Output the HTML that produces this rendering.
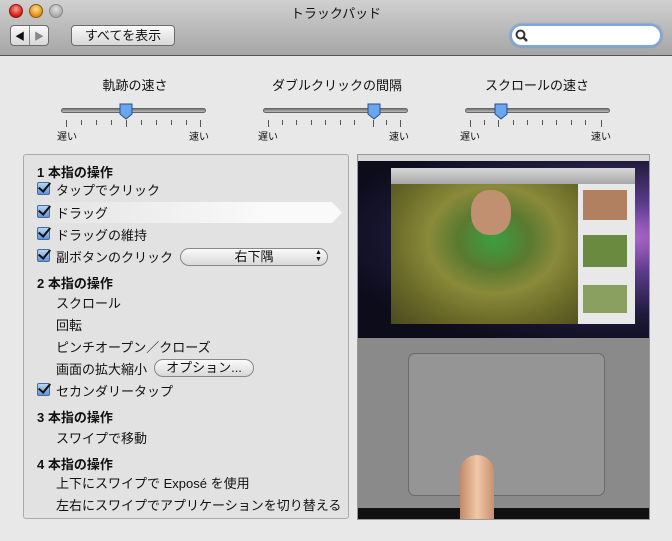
<!DOCTYPE html>
<html><head><meta charset="utf-8"><style>
*{margin:0;padding:0;box-sizing:border-box}
body{width:672px;height:541px;overflow:hidden;background:#e8e8e8;font-family:"Liberation Sans","Noto Sans CJK JP",sans-serif;font-size:13px;color:#111;position:relative}
.a{position:absolute;white-space:nowrap}
.tb{position:absolute;left:0;top:0;width:672px;height:56px;background:linear-gradient(#d0d0d0,#a6a6a6);border-bottom:1px solid #555}
.light{position:absolute;top:4px;width:14px;height:14px;border-radius:50%}
.btn{position:absolute;height:21px;border:1px solid #6b6b6b;border-radius:4px;background:linear-gradient(#fafafa,#d8d8d8);text-align:center;line-height:19px;font-size:13px}
.slider{position:absolute;height:5px;border-radius:3px;background:linear-gradient(#777,#bbb);border:1px solid #666}
.thumb{position:absolute;width:14px;height:17px}
.ticks{position:absolute;height:6px}
.small{font-size:10px}
.panel{position:absolute;left:23px;top:154px;width:326px;height:365px;border:1px solid #aaa;border-radius:3px;background:#e2e2e2}
.cb{position:absolute;width:13px;height:13px;border:1px solid #4a6a9a;border-radius:2px;background:linear-gradient(#b8d4f4,#5d95dc)}
.cb:after{content:"";position:absolute;left:3px;top:-3px;width:5px;height:10px;border:solid #111;border-width:0 2.5px 2.5px 0;transform:rotate(40deg)}
.h{font-weight:bold}
</style></head><body>
<div class="tb"></div>
<div class="light" style="left:9px;background:radial-gradient(circle at 50% 35%,#ff9a90,#d0180e 70%);border:1px solid #8a1a10"></div>
<div class="light" style="left:29px;background:radial-gradient(circle at 50% 35%,#ffe090,#e08a10 70%);border:1px solid #8a5a10"></div>
<div class="light" style="left:49px;background:radial-gradient(circle at 50% 35%,#e0e0e0,#a8a8a8 70%);border:1px solid #888"></div>
<div class="a" style="left:0;width:672px;top:3px;text-align:center;font-size:13px">トラックパッド</div>
<div class="btn" style="left:10px;top:25px;width:39px;border-radius:4px"></div>
<div class="a" style="left:29px;top:26px;width:1px;height:19px;background:#888"></div>
<div class="a" style="left:15px;top:28px;font-size:10px">◀</div>
<div class="a" style="left:34px;top:28px;font-size:10px;color:#888">▶</div>
<div class="btn" style="left:71px;top:25px;width:104px">すべてを表示</div>
<div class="a" style="left:510px;top:24px;width:152px;height:23px;border-radius:12px;background:#fff;border:2px solid #7fa6d8;box-shadow:0 0 2px #5a86c8"></div>
<svg class="a" style="left:515px;top:29px" width="14" height="14"><circle cx="5.5" cy="5.5" r="4" fill="none" stroke="#333" stroke-width="2"/><line x1="8.5" y1="8.5" x2="12" y2="12" stroke="#333" stroke-width="2.5"/></svg>

<div class="a" style="left:60px;width:150px;top:75px;text-align:center">軌跡の速さ</div>
<div class="a" style="left:262px;width:150px;top:75px;text-align:center">ダブルクリックの間隔</div>
<div class="a" style="left:462px;width:150px;top:75px;text-align:center">スクロールの速さ</div>

<div class="slider" style="left:61px;top:108px;width:145px"></div>
<div class="slider" style="left:263px;top:108px;width:145px"></div>
<div class="slider" style="left:465px;top:108px;width:145px"></div>
<svg class="thumb" style="left:119px;top:103px" viewBox="0 0 14 17"><path d="M1 1h12v10l-6 5-6-5z" fill="#6aa6ee" stroke="#2c4f8a"/></svg>
<svg class="thumb" style="left:367px;top:103px" viewBox="0 0 14 17"><path d="M1 1h12v10l-6 5-6-5z" fill="#6aa6ee" stroke="#2c4f8a"/></svg>
<svg class="thumb" style="left:494px;top:103px" viewBox="0 0 14 17"><path d="M1 1h12v10l-6 5-6-5z" fill="#6aa6ee" stroke="#2c4f8a"/></svg>

<svg class="a" style="left:0;top:120px" width="672" height="8">
<g stroke="#555" stroke-width="1">
<path d="M66.5 0v7M81.5 0v5M96.5 0v5M111.5 0v5M126.5 0v7M141.5 0v5M156.5 0v5M171.5 0v5M186.5 0v5M200.5 0v7"/>
<path d="M268.5 0v7M282.5 0v5M296.5 0v5M311.5 0v5M325.5 0v5M340.5 0v5M354.5 0v5M373.5 0v7M386.5 0v5M400.5 0v7"/>
<path d="M470.5 0v7M484.5 0v5M498.5 0v7M513.5 0v5M527.5 0v5M542.5 0v5M556.5 0v5M571.5 0v5M585.5 0v5M601.5 0v7"/>
</g></svg>
<div class="a small" style="left:57px;top:128px">遅い</div><div class="a small" style="left:189px;top:128px">速い</div>
<div class="a small" style="left:258px;top:128px">遅い</div><div class="a small" style="left:389px;top:128px">速い</div>
<div class="a small" style="left:460px;top:128px">遅い</div><div class="a small" style="left:591px;top:128px">速い</div>

<div class="panel"></div>
<div class="a" style="left:24px;top:202px;width:306px;height:21px;background:linear-gradient(90deg,#e2e2e2,#fafafa 80%)"></div>
<svg class="a" style="left:330px;top:202px" width="14" height="21"><path d="M0 0h2l10 10.5L2 21H0z" fill="#fafafa"/></svg>

<div class="a h" style="left:37px;top:162px">1 本指の操作</div>
<div class="cb" style="left:37px;top:182px"></div><div class="a" style="left:56px;top:180px">タップでクリック</div>
<div class="cb" style="left:37px;top:205px"></div><div class="a" style="left:56px;top:203px">ドラッグ</div>
<div class="cb" style="left:37px;top:227px"></div><div class="a" style="left:56px;top:225px">ドラッグの維持</div>
<div class="cb" style="left:37px;top:249px"></div><div class="a" style="left:56px;top:247px">副ボタンのクリック</div>
<div class="btn" style="left:180px;top:248px;width:148px;border-radius:9px;height:18px;line-height:16px;border-color:#888">右下隅</div>
<div class="a" style="left:315px;top:249px;font-size:7px;line-height:7px">▲<br>▼</div>
<div class="a h" style="left:37px;top:273px">2 本指の操作</div>
<div class="a" style="left:56px;top:293px">スクロール</div>
<div class="a" style="left:56px;top:315px">回転</div>
<div class="a" style="left:56px;top:337px">ピンチオープン／クローズ</div>
<div class="a" style="left:56px;top:359px">画面の拡大縮小</div>
<div class="btn" style="left:154px;top:359px;width:100px;border-radius:9px;height:18px;line-height:16px;border-color:#888">オプション...</div>
<div class="cb" style="left:37px;top:383px"></div><div class="a" style="left:56px;top:381px">セカンダリータップ</div>
<div class="a h" style="left:37px;top:407px">3 本指の操作</div>
<div class="a" style="left:56px;top:428px">スワイプで移動</div>
<div class="a h" style="left:37px;top:454px">4 本指の操作</div>
<div class="a" style="left:56px;top:473px">上下にスワイプで Exposé を使用</div>
<div class="a" style="left:56px;top:495px">左右にスワイプでアプリケーションを切り替える</div>

<div class="a" style="left:357px;top:154px;width:293px;height:366px;border:1px solid #999;background:#858585;overflow:hidden">
 <div class="a" style="left:0;top:0;width:293px;height:183px;background:radial-gradient(ellipse at 90% 45%,#b46ad0 0%,#5a3a8a 25%,#1e1a3a 55%,#0c0c1a 80%)"></div>
 <div class="a" style="left:0;top:0;width:293px;height:6px;background:#d8d8d8"></div>
 <div class="a" style="left:33px;top:13px;width:244px;height:16px;background:linear-gradient(#d6d6d6,#a8a8a8)"></div>
 <div class="a" style="left:33px;top:29px;width:187px;height:140px;background:radial-gradient(ellipse at 55% 40%,#3aa040 0%,#5a7a30 25%,#8a8a3a 45%,#6a6a28 70%,#4a4a20 100%)"></div>
 <div class="a" style="left:113px;top:35px;width:40px;height:45px;border-radius:45%;background:#c09070"></div>
 <div class="a" style="left:220px;top:29px;width:57px;height:140px;background:#e8e8e8"></div>
 <div class="a" style="left:225px;top:35px;width:44px;height:30px;background:#b08060"></div>
 <div class="a" style="left:225px;top:80px;width:44px;height:32px;background:#6a8a40"></div>
 <div class="a" style="left:225px;top:130px;width:44px;height:28px;background:#8aa060"></div>
 <div class="a" style="left:0;top:183px;width:293px;height:172px;background:#8a8a8a"></div>
 <div class="a" style="left:50px;top:198px;width:197px;height:143px;border-radius:7px;background:#959595;border:1px solid #6a6a6a"></div>
 <div class="a" style="left:0;top:353px;width:293px;height:13px;background:#111"></div>
 <div class="a" style="left:102px;top:300px;width:34px;height:70px;border-radius:17px 17px 0 0;background:linear-gradient(90deg,#c08a6a,#f0c8a8,#c89070)"></div>
</div>
</body></html>
